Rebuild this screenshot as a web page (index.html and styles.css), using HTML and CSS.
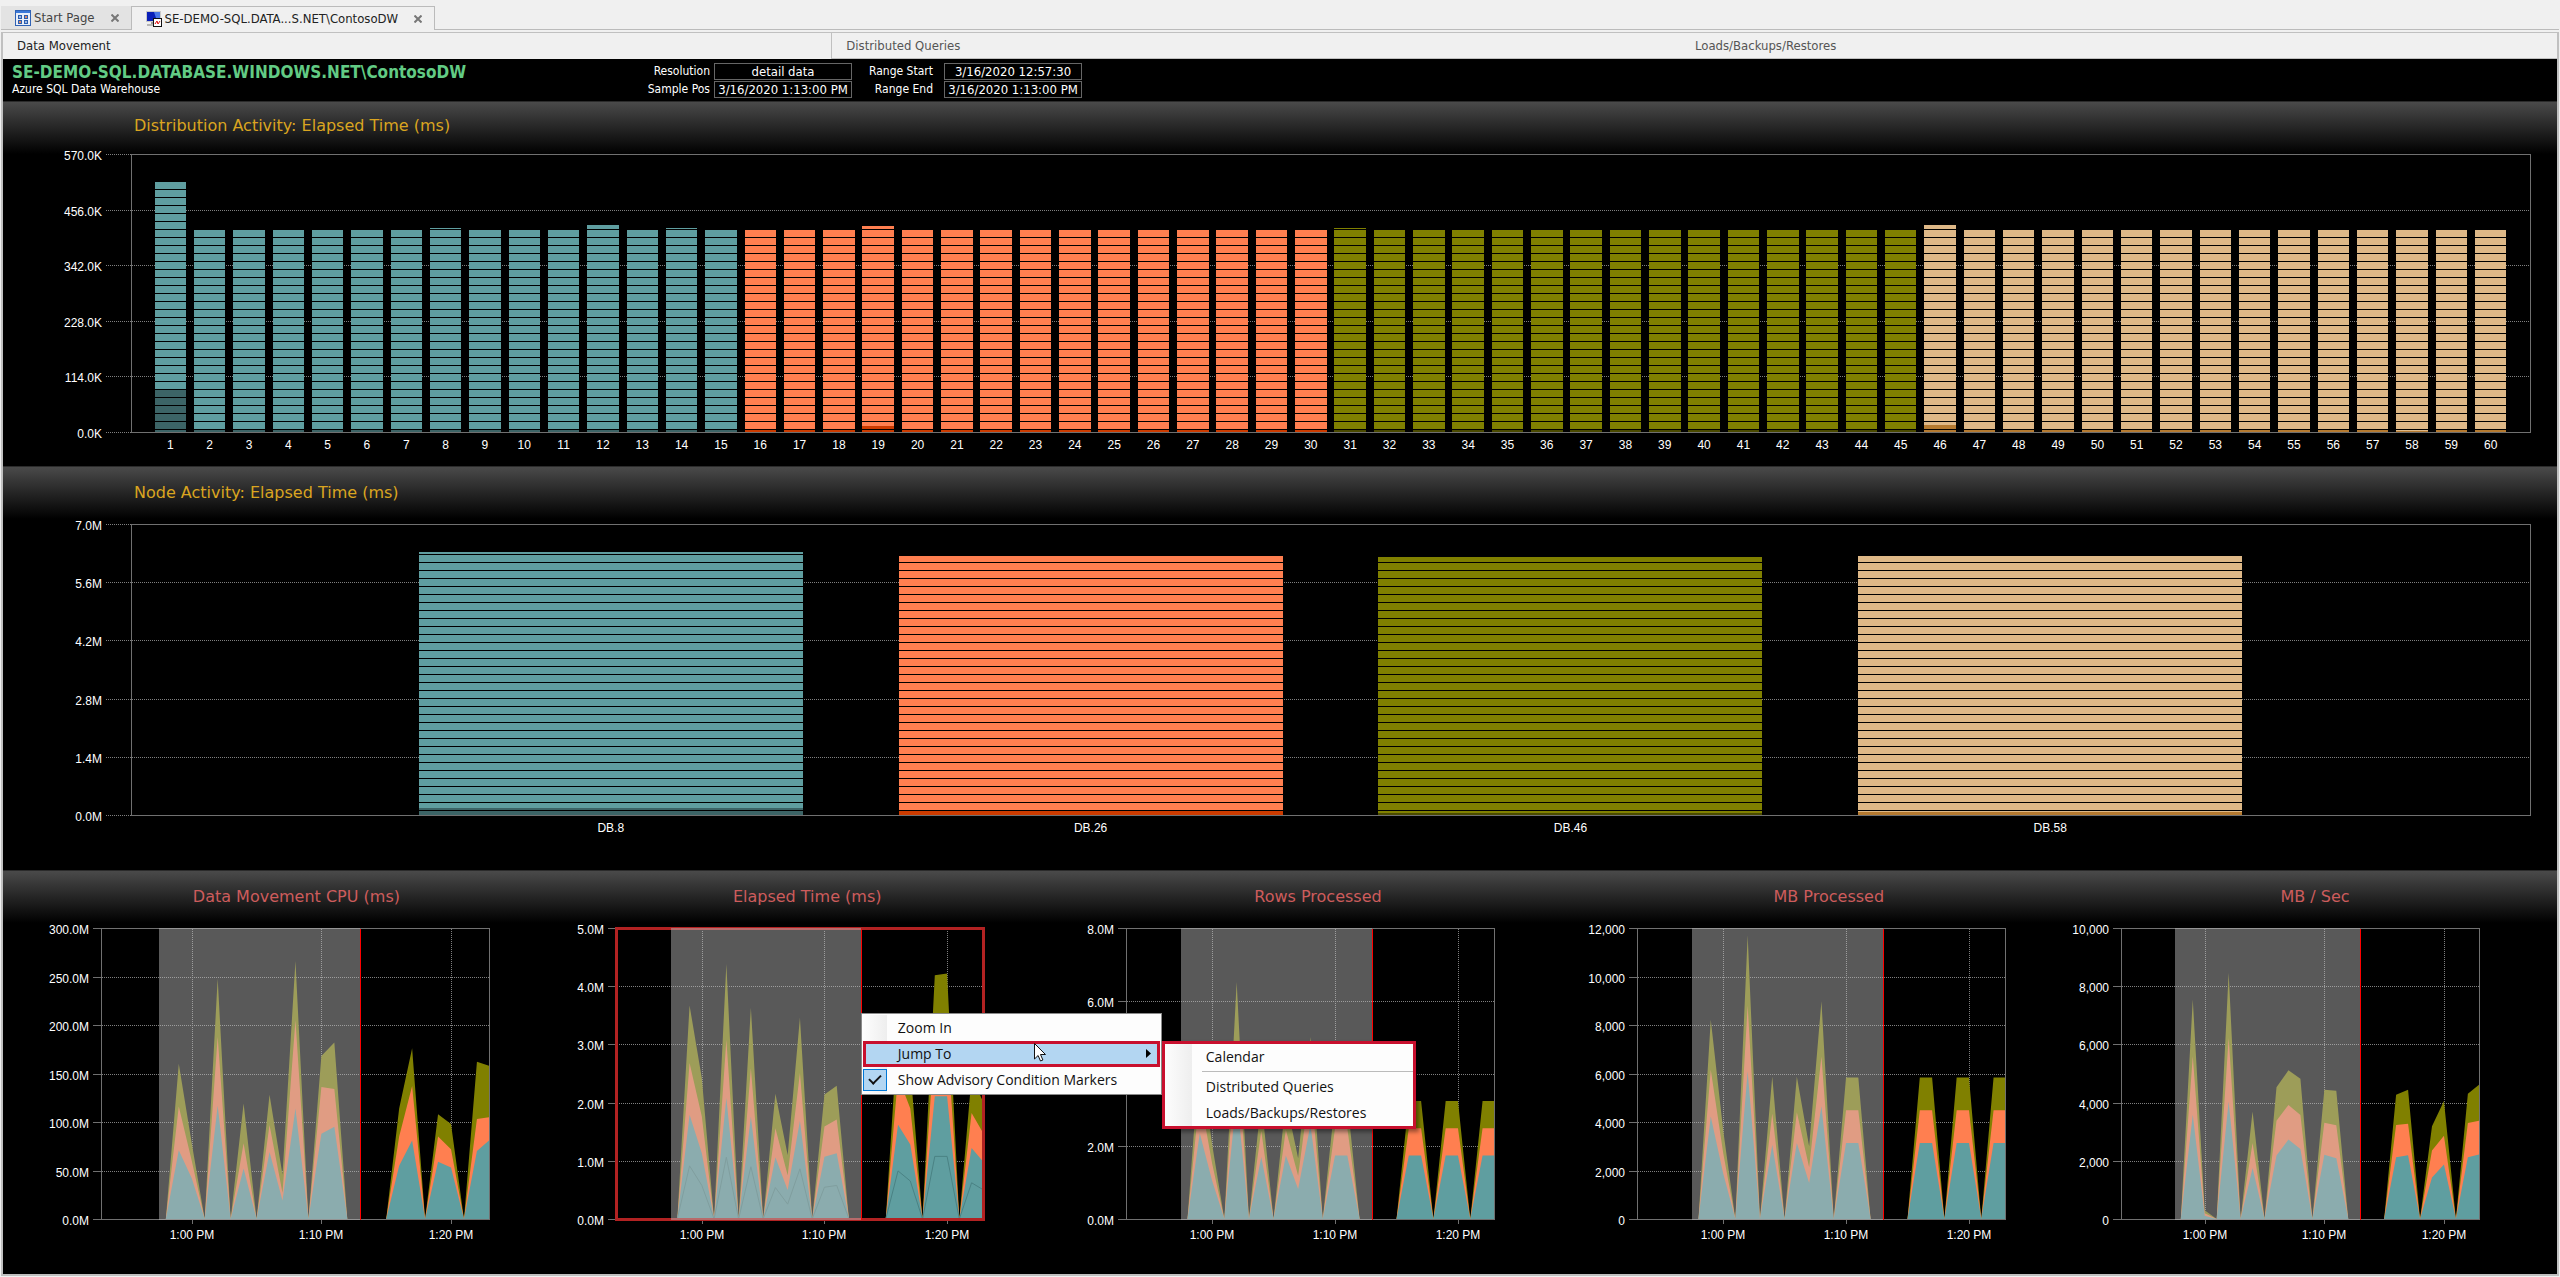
FILE: index.html
```
<!DOCTYPE html>
<html lang="en">
<head>
  <meta charset="UTF-8">
  <meta name="viewport" content="width=device-width, initial-scale=1.0">
  <title>SE-DEMO-SQL.DATABASE.WINDOWS.NET\ContosoDW</title>
  <link rel="stylesheet" href="styles.css">
</head>
<body>
  <nav class="doc-tabs">
    <div class="doc-tab">
      <svg class="tab-icon" viewBox="0 0 16 16" aria-hidden="true">
        <rect x="0.5" y="0.5" width="15" height="15" fill="#e8eef8" stroke="#2f62b5"/>
        <rect x="1" y="1" width="14" height="2" fill="#3b78d8"/>
        <g fill="#2a5db0"><rect x="3" y="5" width="4" height="4"/><rect x="9" y="5" width="4" height="4"/><rect x="3" y="10" width="4" height="4"/><rect x="9" y="10" width="4" height="4"/></g>
        <g fill="#9fb8e0"><rect x="4" y="6" width="2" height="2"/><rect x="10" y="11" width="2" height="2"/></g>
        <g fill="#d98a6a"><rect x="10" y="6" width="2" height="2"/><rect x="4" y="11" width="2" height="2"/></g>
      </svg>
      <button class="tab-name" type="button">Start Page</button>
      <button class="tab-close" type="button" aria-label="Close Start Page">
        <svg viewBox="0 0 8 8"><path d="M0.5 0.5l7 7M7.5 0.5l-7 7"/></svg>
      </button>
    </div>
    <div class="doc-tab doc-tab-active">
      <svg class="tab-icon" viewBox="0 0 16 16" aria-hidden="true">
        <rect x="0" y="0" width="15" height="11" fill="#c9c9c9"/>
        <rect x="1" y="1" width="13" height="9" fill="#0a1fb8"/>
        <path d="M8 1h6v9h-3z" fill="#4a78e8"/>
        <rect x="5" y="11" width="4" height="2" fill="#999"/>
        <rect x="1" y="13" width="8" height="2" fill="#b5b5b5"/>
        <rect x="7.500" y="7.500" width="8" height="8" fill="#fff" stroke="#111"/>
        <path d="M9 13l2-3 1 3 2-3" fill="none" stroke="#e01010"/>
      </svg>
      <button class="tab-name" type="button">SE-DEMO-SQL.DATA...S.NET\ContosoDW</button>
      <button class="tab-close" type="button" aria-label="Close SE-DEMO-SQL">
        <svg viewBox="0 0 8 8"><path d="M0.5 0.5l7 7M7.5 0.5l-7 7"/></svg>
      </button>
    </div>
    <div class="doc-tabs-rest"></div>
  </nav>

  <main class="workspace">
    <div class="view-tabs" role="tablist">
      <button class="view-tab view-tab-active" type="button" role="tab" aria-selected="true">Data Movement</button>
      <button class="view-tab" type="button" role="tab">Distributed Queries</button>
      <button class="view-tab" type="button" role="tab">Loads/Backups/Restores</button>
    </div>

    <header class="server">
      <div class="server-name">
        <h1>SE-DEMO-SQL.DATABASE.WINDOWS.NET\ContosoDW</h1>
        <p>Azure SQL Data Warehouse</p>
      </div>
      <div class="range">
        <label for="resolution">Resolution</label>
        <input id="resolution" value="detail data" readonly>
        <label for="rangeStart">Range Start</label>
        <input id="rangeStart" value="3/16/2020 12:57:30" readonly>
        <label for="samplePos">Sample Pos</label>
        <input id="samplePos" value="3/16/2020 1:13:00 PM" readonly>
        <label for="rangeEnd">Range End</label>
        <input id="rangeEnd" value="3/16/2020 1:13:00 PM" readonly>
      </div>
    </header>

    <section class="panel">
      <h2>Distribution Activity: Elapsed Time (ms)</h2>
      <svg class="bar-chart" id="distribution"></svg>
    </section>

    <section class="panel">
      <h2>Node Activity: Elapsed Time (ms)</h2>
      <svg class="bar-chart bar-chart-tall" id="node"></svg>
    </section>

    <section class="panel trends">
      <div class="trend">
        <h3>Data Movement CPU (ms)</h3>
        <svg class="area-chart" id="cpu"></svg>
      </div>
      <div class="trend">
        <h3>Elapsed Time (ms)</h3>
        <svg class="area-chart" id="elapsed"></svg>
        <div class="menu">
          <button class="menu-item" type="button">Zoom In</button>
          <button class="menu-item menu-item-open" type="button">Jump To
            <svg class="menu-arrow" viewBox="0 0 5 9"><path d="M0 0l5 4.500-5 4.500z"/></svg>
          </button>
          <label class="menu-item menu-item-check"><input type="checkbox" checked>Show Advisory Condition Markers</label>
          <div class="menu submenu">
            <button class="menu-item" type="button">Calendar</button>
            <hr>
            <button class="menu-item" type="button">Distributed Queries</button>
            <button class="menu-item" type="button">Loads/Backups/Restores</button>
          </div>
          <svg class="cursor" viewBox="0 0 12 19" aria-hidden="true"><path d="M0.5 0.5v15.500l3.600-3.500 2.400 5.500 2.400-1-2.400-5.500h5z" fill="#fff" stroke="#111"/></svg>
        </div>
      </div>
      <div class="trend">
        <h3>Rows Processed</h3>
        <svg class="area-chart" id="rows"></svg>
      </div>
      <div class="trend">
        <h3>MB Processed</h3>
        <svg class="area-chart" id="mb"></svg>
      </div>
      <div class="trend">
        <h3>MB / Sec</h3>
        <svg class="area-chart" id="mbsec"></svg>
      </div>
    </section>
  </main>
  <script src="charts.js"></script>
</body>
</html>
```
FILE: styles.css
```
* { box-sizing: border-box; }
body {
  margin: 0;
  padding: 6px 1px 1px;
  background: #f0f0f0;
  color: #222;
  font: 12px/16px "DejaVu Sans Condensed", "DejaVu Sans", sans-serif;
}
button, input { font: inherit; color: inherit; }
button { border: 0; padding: 0; background: none; text-align: left; }
h1, h2, h3, p { margin: 0; font-weight: normal; }

/* document tabs */
.doc-tabs { display: flex; height: 24px; font-size: 13px; }
.doc-tab {
  display: flex;
  align-items: center;
  padding: 0 12px 0 14px;
  background: #e3e3e3;
  border-bottom: 1px solid #bbb;
  color: #444;
}
.doc-tab-active {
  background: #f0f0f0;
  border: 1px solid #bbb;
  border-bottom: 0;
  color: #222;
}
.doc-tabs-rest { flex: 1; border-bottom: 1px solid #bbb; }
.tab-icon { width: 16px; height: 16px; margin-right: 3px; }
.tab-close { display: flex; margin-left: 16px; }
.tab-close svg { width: 8px; height: 8px; fill: none; stroke: #777; stroke-width: 2; }

.workspace {
  margin-top: 2px;
  border: 2px solid #c0c0c0;
  border-top-width: 1px;
  background: #000;
  color: #fff;
}

/* view tabs */
.view-tabs { display: flex; height: 26px; background: #f0f0f0; font-size: 13px; }
.view-tab { flex: 1 1 auto; padding: 0 14px; color: #555; border-bottom: 1px solid #c0c0c0; }
.view-tab-active { color: #222; border-bottom: 0; border-right: 1px solid #c0c0c0; }

/* server header */
.server { display: flex; height: 42px; padding-left: 9px; }
.server-name { width: 616px; padding-top: 4px; }
.server h1 { font-size: 17px; line-height: 18px; font-weight: bold; color: #62cb84; }
.range {
  display: grid;
  grid-template-columns: 82px 138px 84px 138px;
  grid-auto-rows: 17px;
  column-gap: 4px;
  row-gap: 1px;
  padding-top: 4px;
  text-align: right;
}
.range label:nth-of-type(even) { padding-right: 7px; }
.range input {
  min-width: 0;
  padding: 0;
  border: 1px solid #666;
  background: #000;
  font-size: 13px;
  text-align: center;
}

/* chart panels */
.panel {
  border-top: 1px solid #2b2b2b;
  background: linear-gradient(#4a4a4a, #000 52px) #000 no-repeat;
  height: 365px;
}
.panel + .panel { height: 404px; }
h2, h3 { font: 16px/20px "DejaVu Sans", sans-serif; }
h2 { padding: 14px 0 0 131px; color: #daa520; }
.panel + .panel h2 { padding-top: 16px; }
h3 { padding-top: 16px; text-align: center; color: #cd5c5c; }
.bar-chart { display: block; width: 100%; height: 330px; }
.bar-chart-tall { height: 360px; }
.trends {
  display: grid;
  grid-template-columns: repeat(4, minmax(0, 511fr)) minmax(0, 462fr);
  padding: 0 11px 0 38px;
}
.trend { position: relative; }
.area-chart { display: block; width: 100%; height: 360px; overflow: visible; }
svg text { font: 12px "Liberation Sans", Arial, sans-serif; fill: #fff; }
.axis { fill: none; stroke: #707070; shape-rendering: crispEdges; }
.grid { stroke: #808080; stroke-dasharray: 1 1; shape-rendering: crispEdges; }
.marker { stroke: #f00; shape-rendering: crispEdges; }
.selection { fill: #bebebe; fill-opacity: 0.470; }
.highlight { fill: none; stroke: #b22222; stroke-width: 3; }

/* context menu */
.menu {
  position: absolute;
  left: 309px;
  top: 142px;
  width: 301px;
  padding: 1px;
  background: linear-gradient(90deg, #fdfdfd, #eee) 1px 1px / 24px calc(100% - 2px) no-repeat #fdfdfd;
  border: 1px solid #8a8a8a;
  color: #111;
  font: 14px/24px "Open Sans", "Noto Sans", sans-serif;
  z-index: 1;
}
.menu-item { display: flex; align-items: center; width: 100%; height: 26px; padding: 0 0 1px 35px; }
.menu-item-open { background: #b3d6f2; outline: 3px solid #c8102e; outline-offset: -3px; }
.menu-arrow { width: 5px; height: 9px; margin: 0 9px 0 auto; }
.menu-item-check { padding: 0 0 1px; gap: 11px; }
.menu-item-check input {
  appearance: none;
  width: 24px;
  height: 22px;
  margin: 0;
  border: 1px solid #0078d7;
  background: #b3d6f2;
  display: grid;
  place-items: center;
}
.menu-item-check input::before {
  content: "";
  width: 10px;
  height: 5px;
  border: solid #111;
  border-width: 0 0 2px 2px;
  transform: rotate(-45deg) translate(1px, -1px);
}
.submenu {
  left: 300px;
  top: 27px;
  width: 254px;
  padding: 0;
  border: 3px solid #c8102e;
  background-size: 27px 100%;
  background-position: 0 0;
  box-shadow: 3px 3px 4px rgba(0, 0, 0, 0.400);
}
.submenu .menu-item { padding-left: 41px; }
.submenu hr { margin: 1px 0 2px 37px; border: 0; border-top: 1px solid #bbb; }
.cursor { position: absolute; left: 172px; top: 29px; width: 12px; height: 19px; }
```
FILE: charts.js
```
const NS = 'http://www.w3.org/2000/svg';

const teal = ['#5f9ea0', '#3c6466'];
const coral = ['#ff7f50', '#cc3b00'];
const olive = ['#808000', '#4a4a00'];
const tan = ['#deb887', '#b57a30'];

function add(parent, name, attrs, text) {
  const el = document.createElementNS(NS, name);
  for (const key in attrs) el.setAttribute(key, attrs[key]);
  if (text !== undefined) el.textContent = text;
  parent.appendChild(el);
  return el;
}

function line(svg, cls, x1, y1, x2, y2) {
  add(svg, 'line', { class: cls, x1: x1 + 0.5, y1: y1 + 0.5, x2: x2 + 0.5, y2: y2 + 0.5 });
}

// Stacked segment bars, one per distribution or node
function drawBars(id, opts) {
  const svg = document.getElementById(id);
  svg.innerHTML = '';
  const left = 128, right = svg.clientWidth - 27;
  const { top, height, labels, bars } = opts;
  const bottom = top + height;
  labels.forEach((label, i) => {
    const y = Math.round(top + height * i / (labels.length - 1));
    line(svg, 'grid', left - 26, y, left, y);
    if (i > 0 && i < labels.length - 1) line(svg, 'grid', left, y, right, y);
    add(svg, 'text', { x: left - 29, y: y + 6, 'text-anchor': 'end' }, label);
  });
  add(svg, 'rect', { class: 'axis', x: left + 0.5, y: top + 0.5, width: right - left, height: height });
  const pitch = (right - left) / (bars.length + 1);
  bars.forEach((bar, i) => {
    const mid = left + pitch * (i + 1);
    const x = Math.round(mid - pitch * 0.4);
    const w = Math.round(mid + pitch * 0.4) - x;
    add(svg, 'rect', { x, y: bottom - bar.h, width: w, height: bar.h, fill: bar.color[0] });
    add(svg, 'rect', { x, y: bottom - bar.low, width: w, height: bar.low, fill: bar.color[1] });
    for (let y = opts.gap; y < bar.h; y += 8) {
      add(svg, 'rect', { x, y: bottom - y, width: w, height: 1, fill: '#000' });
    }
    add(svg, 'text', { x: mid, y: bottom + 17, 'text-anchor': 'middle' }, bar.name);
  });
}

// Stacked area over 12:53 PM - 1:23 PM, rows are [minute, total, middle, bottom]
function drawArea(id, opts) {
  const svg = document.getElementById(id);
  svg.innerHTML = '';
  const left = opts.left, right = Math.round(svg.clientWidth) - opts.right;
  const top = 21, height = 291, bottom = top + height;
  const first = -7, last = 22.93;
  const px = t => left + (t - first) / (last - first) * (right - left);
  const py = v => bottom - v / opts.max * height;
  const steps = opts.labels.length - 1;

  opts.labels.forEach((label, i) => {
    const y = Math.round(top + height * i / steps);
    line(svg, 'axis', left - 9, y, left, y);
    if (i > 0 && i < steps) line(svg, 'grid', left, y, right, y);
    add(svg, 'text', { x: left - 12, y: y + 6, 'text-anchor': 'end' }, label);
  });
  [[0, '1:00 PM'], [10, '1:10 PM'], [20, '1:20 PM']].forEach(([t, label]) => {
    const x = Math.round(px(t));
    line(svg, 'grid', x, top, x, bottom);
    line(svg, 'axis', x, bottom, x, bottom + 4);
    add(svg, 'text', { x, y: bottom + 20, 'text-anchor': 'middle' }, label);
  });

  const colors = [olive[0], coral[0], teal[0]];
  [opts.data.filter(r => r[0] < 14), opts.data.filter(r => r[0] > 14)].forEach(part => {
    const from = part[0][0], to = part[part.length - 1][0];
    for (let s = 1; s <= 3; s++) {
      const pts = part.map(r => Math.min(px(r[0]), right) + ',' + py(r[s] || 0)).join(' ');
      add(svg, 'polygon', { points: `${px(from)},${bottom} ${pts} ${Math.min(px(to), right)},${bottom}`, fill: colors[s - 1] });
    }
    if (opts.split) {
      const pts = part.map(r => Math.min(px(r[0]), right) + ',' + py((r[3] || 0) * 0.51)).join(' ');
      add(svg, 'polyline', { points: pts, fill: 'none', stroke: '#4a8284' });
    }
  });

  add(svg, 'rect', { class: 'axis', x: left + 0.5, y: top + 0.5, width: right - left, height });
  if (opts.highlight) {
    add(svg, 'rect', { class: 'highlight', x: left + 0.5, y: top + 0.5, width: right - left, height });
  }
  const start = Math.round(px(-2.5)), end = Math.round(px(13));
  add(svg, 'rect', { class: 'selection', x: start, y: top, width: end - start, height: height + 1 });
  line(svg, 'marker', end, top, end, bottom);
}

const taller = { 1: 250, 8: 204, 12: 207, 14: 204, 19: 206, 31: 204, 46: 207 };
const lower = { 1: 43, 19: 6, 46: 7, 58: 1 };
const distributions = [];
for (let i = 1; i <= 60; i++) {
  distributions.push({
    name: i,
    h: taller[i] || 202,
    low: lower[i] || 2,
    color: [teal, coral, olive, tan][Math.floor((i - 1) / 15)],
  });
}

const mbData = [
  [-2], [-1, 8220, 6150, 4230], [0, 3700, 2750, 1900], [1], [2, 11700, 8800, 6090], [3],
  [4, 5880, 4350, 3060], [5], [6, 5880, 4400, 3130], [7, 3000, 2130, 1480], [8, 8980, 6700, 4650], [9],
  [10, 5830, 4480, 3130], [11, 5830, 4480, 3130], [12],
  [15], [16, 5830, 4480, 3130], [17, 5830, 4480, 3130], [18], [19, 5830, 4480, 3130],
  [20, 5830, 4480, 3130], [21], [22, 5830, 4480, 3130], [23, 5830, 4480, 3130],
];

function draw() {
  drawBars('distribution', {
    top: 18, height: 278, gap: 3,
    labels: ['570.0K', '456.0K', '342.0K', '228.0K', '114.0K', '0.0K'],
    bars: distributions,
  });
  drawBars('node', {
    top: 21, height: 291, gap: 5,
    labels: ['7.0M', '5.6M', '4.2M', '2.8M', '1.4M', '0.0M'],
    bars: [
      { name: 'DB.8', h: 263, low: 7, color: teal },
      { name: 'DB.26', h: 259, low: 4, color: coral },
      { name: 'DB.46', h: 258, low: 2, color: olive },
      { name: 'DB.58', h: 259, low: 3, color: tan },
    ],
  });
  drawArea('cpu', {
    left: 60, right: 63, max: 300,
    labels: ['300.0M', '250.0M', '200.0M', '150.0M', '100.0M', '50.0M', '0.0M'],
    data: [
      [-2], [-1, 160, 116, 71], [0, 78, 60, 42], [1], [2, 248, 188, 117], [3], [4, 119, 78, 52], [5],
      [6, 128, 97, 69], [7, 46, 27, 19], [8, 266, 205, 114], [9], [10, 168, 136, 88], [11, 182, 134, 95], [12],
      [15], [16, 114, 85, 55], [17, 176, 137, 81], [18], [19, 108, 85, 59], [20, 98, 72, 53], [21],
      [22, 162, 103, 70], [23, 158, 105, 81],
    ],
  });
  drawArea('elapsed', {
    left: 64, right: 80, max: 5, split: true, highlight: true,
    labels: ['5.0M', '4.0M', '3.0M', '2.0M', '1.0M', '0.0M'],
    data: [
      [-2], [-1, 3.67, 2.68, 1.79], [0, 2.42, 1.76, 1.13], [1], [2, 4.38, 3.08, 2.08], [3], [4, 3.63, 2.59, 1.76], [5],
      [6, 2.15, 1.56, 1.06], [7, 1.1, 0.75, 0.5], [8, 3.46, 2.51, 1.69], [9], [10, 2.14, 1.59, 1.07], [11, 2.29, 1.71, 1.13], [12],
      [15], [16, 3.3, 2.45, 1.62], [17, 2.6, 1.9, 1.28], [18], [19, 4.19, 3.15, 2.11], [20, 4.22, 3.15, 2.11], [21],
      [22, 2.45, 1.82, 1.22], [23, 2.02, 1.48, 0.99],
    ],
  });
  drawArea('rows', {
    left: 63, right: 80, max: 8,
    labels: ['8.0M', '6.0M', '4.0M', '2.0M', '0.0M'],
    data: mbData.map(([t, ...v]) => [t, ...v.map(n => n * 0.000557)]),
  });
  drawArea('mb', {
    left: 64, right: 79, max: 12000,
    labels: ['12,000', '10,000', '8,000', '6,000', '4,000', '2,000', '0'],
    data: mbData,
  });
  drawArea('mbsec', {
    left: 37, right: 67, max: 10000,
    labels: ['10,000', '8,000', '6,000', '4,000', '2,000', '0'],
    data: [
      [-2], [-1, 7540, 5590, 3585], [0, 300, 200, 110], [1], [2, 8465, 6220, 4040], [3], [4, 3690, 2610, 1750], [5],
      [6, 4525, 3380, 2180], [7, 5110, 3920, 2730], [8, 4820, 3570, 2405], [9], [10, 4445, 3310, 2210], [11, 4410, 3220, 2085], [12],
      [15], [16, 4270, 3230, 2120], [17, 4445, 3275, 2190], [18], [19, 3185, 2350, 1430], [20, 4055, 2865, 1870], [21],
      [22, 4305, 3300, 2120], [23, 4615, 3380, 2220],
    ],
  });
}

draw();
window.addEventListener('resize', draw);
```
